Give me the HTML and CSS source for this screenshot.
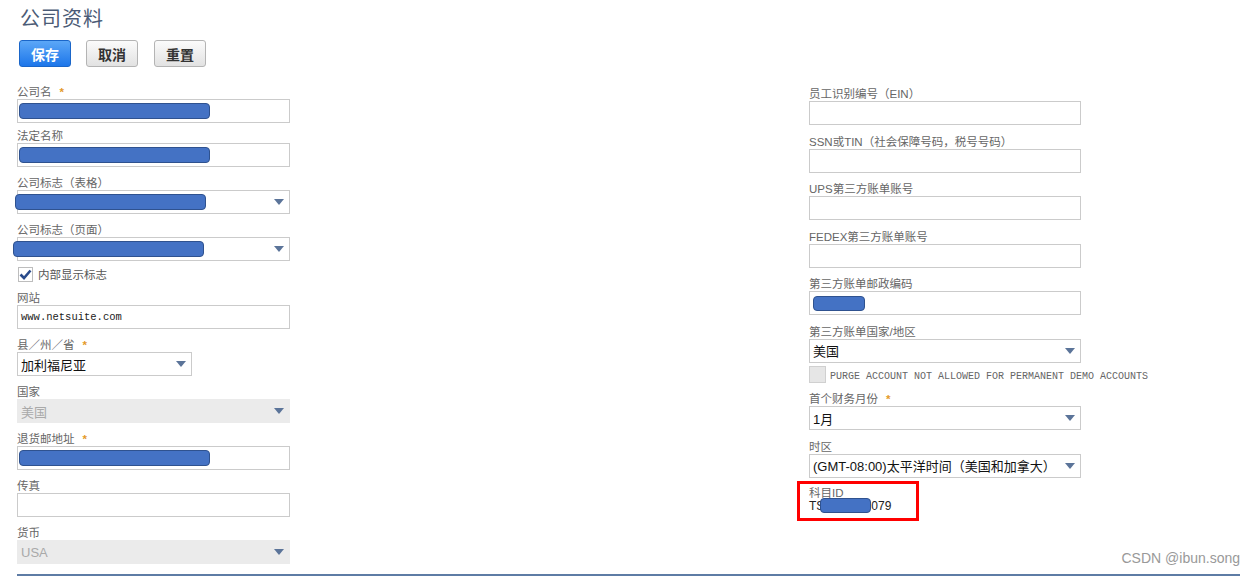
FILE: index.html
```html
<!DOCTYPE html>
<html lang="zh-CN">
<head>
  <meta charset="UTF-8" />
  <meta name="viewport" content="width=device-width, initial-scale=1" />
  <title>公司资料</title>
  <link rel="stylesheet" href="styles.css">
</head>
<body>
  <div class="page">
    <h1 class="page-title">公司资料</h1>
    <div class="toolbar">
      <button class="btn btn-primary">保存</button>
      <button class="btn">取消</button>
      <button class="btn btn-reset">重置</button>
    </div>

    <div class="form">
      <div class="col col-left">
        <div class="field field-first">
          <span class="field-label">公司名<span class="req">*</span></span>
          <div class="input"><span class="mask mask-name"></span></div>
        </div>
        <div class="field field-tight">
          <span class="field-label">法定名称</span>
          <div class="input"><span class="mask mask-name"></span></div>
        </div>
        <div class="field">
          <span class="field-label">公司标志（表格）</span>
          <div class="input select"><span class="mask mask-logo-form"></span></div>
        </div>
        <div class="field">
          <span class="field-label">公司标志（页面）</span>
          <div class="input select"><span class="mask mask-logo-page"></span></div>
        </div>
        <label class="check-row">
          <span class="checkbox is-checked">
            <svg width="13" height="11" viewBox="0 0 13 11"><polyline points="1.5,5.5 5,9 11.5,1.5" fill="none" stroke="#2a4b8c" stroke-width="2.6"/></svg>
          </span>
          <span class="check-label">内部显示标志</span>
        </label>
        <div class="field">
          <span class="field-label">网站</span>
          <div class="input mono">www.netsuite.com</div>
        </div>
        <div class="field">
          <span class="field-label">县／州／省<span class="req">*</span></span>
          <div class="input select input-short">加利福尼亚</div>
        </div>
        <div class="field">
          <span class="field-label">国家</span>
          <div class="input select is-disabled">美国</div>
        </div>
        <div class="field">
          <span class="field-label">退货邮地址<span class="req">*</span></span>
          <div class="input"><span class="mask mask-name"></span></div>
        </div>
        <div class="field">
          <span class="field-label">传真</span>
          <div class="input"></div>
        </div>
        <div class="field">
          <span class="field-label">货币</span>
          <div class="input select is-disabled">USA</div>
        </div>
      </div>

      <div class="col col-right">
        <div class="field">
          <span class="field-label">员工识别编号（EIN）</span>
          <div class="input"></div>
        </div>
        <div class="field">
          <span class="field-label">SSN或TIN（社会保障号码，税号号码）</span>
          <div class="input"></div>
        </div>
        <div class="field">
          <span class="field-label">UPS第三方账单账号</span>
          <div class="input"></div>
        </div>
        <div class="field">
          <span class="field-label">FEDEX第三方账单账号</span>
          <div class="input"></div>
        </div>
        <div class="field">
          <span class="field-label">第三方账单邮政编码</span>
          <div class="input"><span class="mask mask-zip"></span></div>
        </div>
        <div class="field">
          <span class="field-label">第三方账单国家/地区</span>
          <div class="input select">美国</div>
        </div>
        <label class="check-row check-row-disabled">
          <span class="checkbox is-disabled"></span>
          <span class="check-label check-label-caps">PURGE ACCOUNT NOT ALLOWED FOR PERMANENT DEMO ACCOUNTS</span>
        </label>
        <div class="field">
          <span class="field-label">首个财务月份<span class="req">*</span></span>
          <div class="input select">1月</div>
        </div>
        <div class="field">
          <span class="field-label">时区</span>
          <div class="input select">(GMT-08:00)太平洋时间（美国和加拿大）</div>
        </div>
        <div class="field field-id">
          <span class="field-label">科目ID</span>
          <div class="field-value">TS<span class="mask mask-id"></span>079</div>
        </div>
      </div>
    </div>

    <hr class="page-rule">
  </div>
  <div class="watermark">CSDN @ibun.song</div>
</body>
</html>
```

FILE: styles.css
```css
*, *::before, *::after {
  box-sizing: border-box;
}
body {
  margin: 0;
  height: 577px;
  overflow: hidden;
  position: relative;
  background: #fff;
  color: #333;
  font-family: "Liberation Sans", "Noto Sans CJK SC", sans-serif;
}
.page {
  padding: 6px 16px 0 17px;
}
.page-title {
  margin: 0 0 0 3px;
  font-size: 20px;
  line-height: 26px;
  font-weight: normal;
  letter-spacing: 1px;
  color: #4b5b76;
}
.toolbar {
  display: flex;
  gap: 15px;
  margin-top: 8px;
  padding-left: 2px;
}
.btn {
  height: 27px;
  padding: 0 11px;
  font-family: "Liberation Sans", "Noto Sans CJK SC", sans-serif;
  font-size: 14px;
  font-weight: bold;
  color: #333;
  background: linear-gradient(#fbfbfb, #e2e2e2);
  border: 1px solid #b4b4b4;
  border-radius: 3px;
}
.btn-reset {
  margin-left: 1px;
}
.btn-primary {
  color: #fff;
  background: linear-gradient(#5ba7f7, #1d76ea);
  border-color: #1a66c9;
}
.form {
  display: grid;
  grid-template-columns: 273px 272px;
  column-gap: 519px;
  margin-top: 6px;
  align-items: start;
}
.col-right {
  padding-top: 4.5px;
}
.field {
  margin-top: 10px;
}
.col-left .field-first {
  margin-top: 13px;
}
.col-left .field-tight {
  margin-top: 7px;
}
.col-right .field {
  margin-top: 10.5px;
}
.field-label {
  display: block;
  font-size: 11.5px;
  line-height: 13px;
  color: #666;
  white-space: nowrap;
}
.req {
  margin-left: 8px;
  color: #e49a2a;
  font-weight: bold;
}
.input {
  height: 24px;
  display: flex;
  align-items: center;
  padding: 0 3px;
  border: 1px solid #cbcbcb;
  background: #fff;
  font-size: 13px;
  color: #111;
  white-space: nowrap;
}
.input-short {
  width: 175px;
}
.select::after {
  content: "";
  margin-left: auto;
  margin-right: 2px;
  border-left: 5.5px solid transparent;
  border-right: 5.5px solid transparent;
  border-top: 6px solid #5b7499;
}
.select.is-disabled {
  background: #ebebeb;
  border-color: #ebebeb;
  color: #a9a9a9;
}
.mono {
  font-family: "Liberation Mono", monospace;
  font-size: 10.5px;
  color: #222;
}
.mask {
  display: block;
  flex: none;
  height: 16px;
  background: #4472c4;
  border: 1.5px solid #2f528f;
  border-radius: 4px;
}
.mask-name {
  width: 191px;
  margin-left: -2px;
}
.mask-logo-form {
  width: 191px;
  margin-left: -6px;
}
.mask-logo-page {
  width: 191px;
  margin-left: -8px;
}
.mask-zip {
  width: 52px;
  height: 15px;
  margin-left: 0;
}
.check-row {
  display: flex;
  align-items: center;
  gap: 5px;
  height: 16px;
  margin-top: 5px;
  padding-left: 1px;
}
.checkbox {
  flex: none;
  width: 15px;
  height: 15px;
  display: flex;
  align-items: center;
  justify-content: center;
  border: 1px solid #bdbdbd;
  background: #fff;
}
.check-label {
  font-size: 11.5px;
  color: #555;
  white-space: nowrap;
}
.check-row-disabled {
  height: 17px;
  margin-top: 3px;
  padding-left: 0;
  gap: 4px;
}
.checkbox.is-disabled {
  width: 17px;
  height: 17px;
  background: #e6e6e6;
  border-color: #d0d0d0;
}
.check-label-caps {
  font-family: "Liberation Mono", monospace;
  font-size: 10px;
  color: #666;
  padding-top: 4px;
}
.col-right .field-id {
  width: 122px;
  margin-top: 3.5px;
  margin-left: -12px;
  padding: 3px 0 6px 9px;
  border: 3px solid #f00;
}
.field-id .field-label {
  line-height: 12px;
}
.field-value {
  display: flex;
  align-items: center;
  height: 13px;
  font-size: 12px;
  color: #222;
}
.mask-id {
  width: 51px;
  height: 15px;
  margin: 0 0 0 -4px;
}
.page-rule {
  margin: 10px 0 0;
  border: 0;
  border-top: 2px solid #5e7ca5;
}
.watermark {
  position: absolute;
  right: 16px;
  bottom: 10px;
  font-size: 14px;
  line-height: 18px;
  color: #999;
}
```
